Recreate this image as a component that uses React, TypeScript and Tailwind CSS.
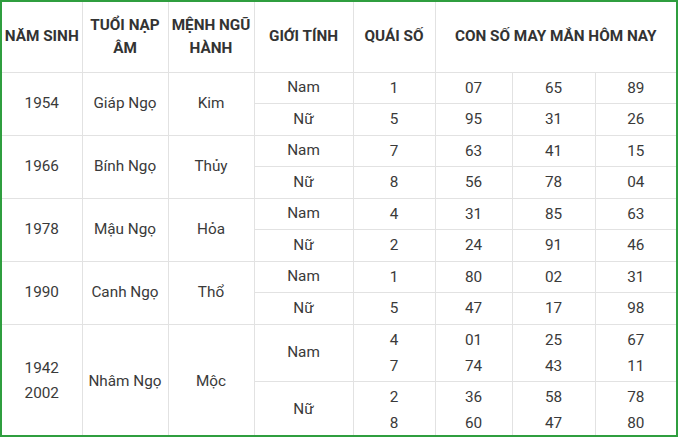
type Row = {
  year: string[];
  napAm: string;
  menh: string;
  nam: { qs: string[]; nums: string[][] };
  nu: { qs: string[]; nums: string[][] };
  tall?: boolean;
};

const rows: Row[] = [
  { year: ["1954"], napAm: "Giáp Ngọ", menh: "Kim", nam: { qs: ["1"], nums: [["07"], ["65"], ["89"]] }, nu: { qs: ["5"], nums: [["95"], ["31"], ["26"]] } },
  { year: ["1966"], napAm: "Bính Ngọ", menh: "Thủy", nam: { qs: ["7"], nums: [["63"], ["41"], ["15"]] }, nu: { qs: ["8"], nums: [["56"], ["78"], ["04"]] } },
  { year: ["1978"], napAm: "Mậu Ngọ", menh: "Hỏa", nam: { qs: ["4"], nums: [["31"], ["85"], ["63"]] }, nu: { qs: ["2"], nums: [["24"], ["91"], ["46"]] } },
  { year: ["1990"], napAm: "Canh Ngọ", menh: "Thổ", nam: { qs: ["1"], nums: [["80"], ["02"], ["31"]] }, nu: { qs: ["5"], nums: [["47"], ["17"], ["98"]] } },
  {
    year: ["1942", "2002"],
    napAm: "Nhâm Ngọ",
    menh: "Mộc",
    tall: true,
    nam: { qs: ["4", "7"], nums: [["01", "74"], ["25", "43"], ["67", "11"]] },
    nu: { qs: ["2", "8"], nums: [["36", "60"], ["58", "47"], ["78", "80"]] },
  },
];

const cell = "border border-[#e2e2e2] text-center align-middle p-0";

function Lines({ items }: { items: string[] }) {
  return (
    <div className="flex flex-col items-center leading-[26px]">
      {items.map((t, i) => (
        <span key={i}>{t}</span>
      ))}
    </div>
  );
}

export default function App() {
  return (
    <div className="w-[680px] h-[438px] bg-white">
      <div
        className="w-[678px] h-[437px] border-2 border-[#2f9e3f] overflow-hidden text-[15.3px] text-[#3a3a3a]"
        style={{ fontFamily: "Roboto, 'Noto Sans', sans-serif" }}
      >
        <table className="w-[674px] border-collapse table-fixed border-hidden">
          <colgroup>
            <col className="w-[80px]" />
            <col className="w-[86px]" />
            <col className="w-[86px]" />
            <col className="w-[99px]" />
            <col className="w-[82px]" />
            <col className="w-[77px]" />
            <col className="w-[83px]" />
            <col className="w-[81px]" />
          </colgroup>
          <thead>
            <tr className="h-[70px] font-bold text-[#333] leading-[23px]">
              <th className={`${cell} font-bold`}>NĂM SINH</th>
              <th className={`${cell} font-bold`}>TUỔI NẠP<br />ÂM</th>
              <th className={`${cell} font-bold`}>MỆNH NGŨ<br />HÀNH</th>
              <th className={`${cell} font-bold`}>GIỚI TÍNH</th>
              <th className={`${cell} font-bold`}>QUÁI SỐ</th>
              <th className={`${cell} font-bold`} colSpan={3}>CON SỐ MAY MẮN HÔM NAY</th>
            </tr>
          </thead>
          <tbody>
            {rows.map((r, i) => (
              <>
                <tr key={`a${i}`} className={r.tall ? "h-[57px]" : "h-[31px]"}>
                  <td className={cell} rowSpan={2}>
                    <div className="flex flex-col items-center leading-[25px]">
                      {r.year.map(y => (
                        <span key={y}>{y}</span>
                      ))}
                    </div>
                  </td>
                  <td className={cell} rowSpan={2}>{r.napAm}</td>
                  <td className={cell} rowSpan={2}>{r.menh}</td>
                  <td className={cell}>Nam</td>
                  <td className={cell}><Lines items={r.nam.qs} /></td>
                  {r.nam.nums.map((n, j) => (
                    <td key={j} className={cell}><Lines items={n} /></td>
                  ))}
                </tr>
                <tr key={`b${i}`} className={r.tall ? "h-[57px]" : "h-[32px]"}>
                  <td className={cell}>Nữ</td>
                  <td className={cell}><Lines items={r.nu.qs} /></td>
                  {r.nu.nums.map((n, j) => (
                    <td key={j} className={cell}><Lines items={n} /></td>
                  ))}
                </tr>
              </>
            ))}
          </tbody>
        </table>
      </div>
    </div>
  );
}
